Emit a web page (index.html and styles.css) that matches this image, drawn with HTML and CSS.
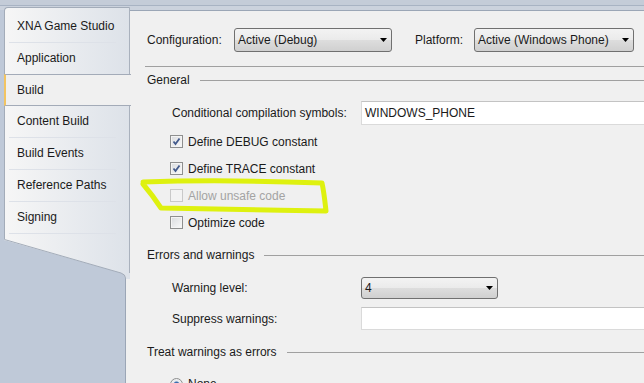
FILE: index.html
```html
<!DOCTYPE html>
<html lang="en">
<head>
    <meta charset="UTF-8">
    <meta name="viewport" content="width=device-width, initial-scale=1.0">
    <title>Build | Project Properties</title>
    <link rel="stylesheet" href="styles.css">
</head>
<body>
    <div class="window">
        <nav class="tabs">
            <div class="tab-list">
                <div class="tab">XNA Game Studio</div>
                <div class="tab">Application</div>
                <div class="tab active">Build</div>
                <div class="tab">Content Build</div>
                <div class="tab">Build Events</div>
                <div class="tab">Reference Paths</div>
                <div class="tab">Signing</div>
            </div>
            <svg class="tab-tail" width="126" height="44" viewBox="0 0 126 44">
                <defs>
                    <linearGradient id="tailfill" x1="0" y1="0" x2="1" y2="0">
                        <stop offset="0" stop-color="#f6f6f6"/>
                        <stop offset="1" stop-color="#dde2e9"/>
                    </linearGradient>
                </defs>
                <path d="M0 0 V5 L117 38 Q121 39.5 121 43 V44 H126 V0 Z" fill="url(#tailfill)"/>
                <path d="M0.5 0 V4.5 L117 38 Q121.5 39.5 121.5 43 V44" fill="none" stroke="#a3acb9"/>
                <path d="M125.5 0 V38" fill="none" stroke="#a9b1bd"/>
            </svg>
        </nav>

        <main class="panel">
            <div class="config-row">
                <span class="config-label">Configuration:</span>
                <div class="combo config-combo"><span>Active (Debug)</span><i class="arrow"></i></div>
                <span class="config-label platform-label">Platform:</span>
                <div class="combo platform-combo"><span>Active (Windows Phone)</span><i class="arrow"></i></div>
            </div>
            <div class="rule"></div>

            <div class="section first-section">General</div>
            <div class="field-row symbols-row">
                <span class="field-label">Conditional compilation symbols:</span>
                <div class="textbox">WINDOWS_PHONE</div>
            </div>
            <div class="check-list">
                <label class="check-row">
                    <span class="checkbox checked">
                        <svg width="11" height="11" viewBox="0 0 11 11"><path d="M2.5 5.5 L4.5 8 L8.5 2.5" fill="none" stroke="#435a8c" stroke-width="1.8"/></svg>
                    </span>
                    Define DEBUG constant
                </label>
                <label class="check-row">
                    <span class="checkbox checked">
                        <svg width="11" height="11" viewBox="0 0 11 11"><path d="M2.5 5.5 L4.5 8 L8.5 2.5" fill="none" stroke="#435a8c" stroke-width="1.8"/></svg>
                    </span>
                    Define TRACE constant
                </label>
                <label class="check-row disabled">
                    <span class="checkbox"></span>
                    Allow unsafe code
                </label>
                <label class="check-row">
                    <span class="checkbox"></span>
                    Optimize code
                </label>
            </div>

            <div class="section errors-section">Errors and warnings</div>
            <div class="field-row level-row">
                <span class="field-label">Warning level:</span>
                <div class="combo level-combo"><span>4</span><i class="arrow"></i></div>
            </div>
            <div class="field-row suppress-row">
                <span class="field-label">Suppress warnings:</span>
                <div class="textbox"></div>
            </div>

            <div class="section treat-section">Treat warnings as errors</div>
            <label class="check-row radio-row">
                <span class="radio"></span>
                None
            </label>
        </main>
    </div>

    <svg class="marker" width="644" height="383" viewBox="0 0 644 383">
        <path d="M143 182 C200 180 270 181 322 183 C324 192 325 202 326 211 C270 210 210 209 161 208 C155 199 149 191 143 184"
              fill="none" stroke="#def10f" stroke-width="5" stroke-linecap="round" stroke-linejoin="round"/>
    </svg>
</body>
</html>
```

FILE: styles.css
```css
body {
    margin: 0;
    width: 644px;
    height: 383px;
    overflow: hidden;
    position: relative;
    font-family: "Liberation Sans", Arial, sans-serif;
    font-size: 12px;
    color: #1a1a1a;
    background: linear-gradient(#c4ccd8 0, #c4ccd8 5px, #a8b3c3 5px, #a8b3c3 6px, #cbd2dd 6px, #cbd2dd 10px, #bfc9d8 10px);
}
.window {
    display: flex;
    align-items: flex-start;
    height: 383px;
    padding-top: 7px;
    box-sizing: border-box;
}
.tabs {
    width: 126px;
    margin-left: 4px;
    margin-right: -5px;
    position: relative;
    z-index: 1;
}
.tab-list {
    background: linear-gradient(to right, #f6f6f6, #dde2e9);
    border: 1px solid #a3acb9;
    border-right-color: #a9b1bd;
    border-bottom: none;
    border-top-left-radius: 4px;
    padding: 3px 0 1px;
}
.tab {
    height: 31px;
    line-height: 31px;
    margin: 0 13px 0 4px;
    padding-left: 8px;
    border-bottom: 1px solid #dde1e8;
    white-space: nowrap;
}
.tab.active {
    height: 30px;
    line-height: 30px;
    margin: -1px -2px 0 -1px;
    padding-left: 11px;
    background: #f0f0f0;
    border-top: 1px solid #a3abb8;
    border-bottom: 1px solid #a3abb8;
    border-left: 2px solid #f2c462;
}
.tab-tail {
    display: block;
}
.panel {
    flex: 1;
    height: 373px;
    margin-top: 3px;
    box-sizing: border-box;
    background: #f0f0f0;
    border-left: 1px solid #9ba6b6;
    border-top: 1px solid #9ba6b6;
    border-top-left-radius: 3px;
    padding: 17px 0 0 21px;
    overflow: hidden;
}
.config-row {
    display: flex;
    align-items: center;
    height: 24px;
}
.config-label {
    width: 87px;
}
.platform-label {
    width: 59px;
    margin-left: 23px;
}
.combo {
    display: flex;
    align-items: center;
    box-sizing: border-box;
    height: 100%;
    border: 1px solid #707070;
    border-radius: 3px;
    background: linear-gradient(#f3f3f3 0%, #ebebeb 48%, #dddddd 52%, #d0d0d0 100%);
    padding: 0 4px 0 3px;
    white-space: nowrap;
}
.combo span {
    flex: 1;
}
.arrow {
    width: 7px;
    height: 4px;
    background: #000;
    clip-path: polygon(0 0, 100% 0, 50% 100%);
}
.config-combo {
    width: 158px;
}
.platform-combo {
    width: 160px;
}
.level-combo {
    width: 137px;
}
.rule {
    height: 1px;
    background: #a0a0a0;
    margin: 14px 0 0 -2px;
}
.section {
    display: flex;
    align-items: center;
    height: 16px;
    white-space: nowrap;
}
.section::after {
    content: "";
    flex: 1;
    height: 1px;
    background: #a0a0a0;
    margin-left: 10px;
}
.first-section {
    margin-top: 5px;
}
.errors-section {
    margin-top: 11px;
}
.treat-section {
    margin-top: 14px;
}
.field-row {
    display: flex;
    align-items: center;
    margin-left: 25px;
}
.field-label {
    width: 189px;
    flex-shrink: 0;
}
.textbox {
    flex: 1;
    height: 100%;
    box-sizing: border-box;
    background: #fff;
    border: 1px solid #dadada;
    border-top-color: #c3c3c3;
    padding-left: 3px;
    margin-right: -10px;
    display: flex;
    align-items: center;
}
.symbols-row {
    height: 24px;
    margin-top: 13px;
}
.level-row {
    height: 22px;
    margin-top: 14px;
}
.suppress-row {
    height: 23px;
    margin-top: 8px;
}
.check-list {
    margin-top: 3px;
}
.check-row {
    display: flex;
    align-items: center;
    height: 27px;
    margin-left: 23px;
}
.check-row.disabled {
    color: #a3a3a3;
}
.checkbox {
    width: 13px;
    height: 13px;
    box-sizing: border-box;
    border: 1px solid #8e8f8f;
    background: linear-gradient(135deg, #d9dbde, #fafafa);
    box-shadow: inset 0 0 0 1px #f4f4f4;
    margin-right: 5px;
    display: flex;
    align-items: center;
    justify-content: center;
}
.disabled .checkbox {
    border-color: #c9c9c9;
    background: #f3f3f3;
    box-shadow: none;
}
.radio-row {
    height: 16px;
    margin-top: 16px;
}
.radio {
    width: 13px;
    height: 13px;
    box-sizing: border-box;
    border: 1px solid #8e8f8f;
    border-radius: 50%;
    background: radial-gradient(circle, #1f4e8a 0, #3f73b5 2.5px, #e6e8eb 3.5px, #f8f8f8 100%);
    margin-right: 5px;
}
.marker {
    position: absolute;
    top: 0;
    left: 0;
    pointer-events: none;
}
```
